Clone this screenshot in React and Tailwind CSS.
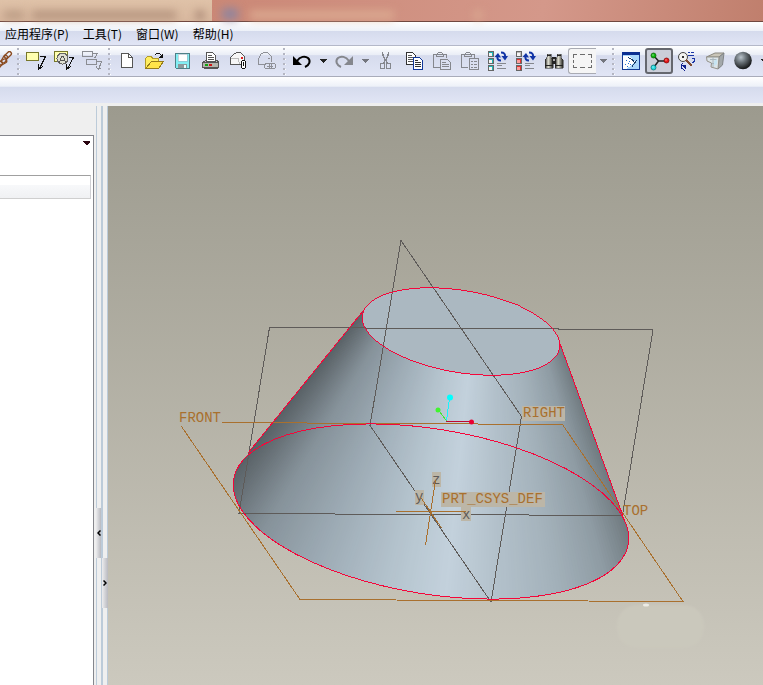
import React from "react";

const MENUS = ["应用程序(P)", "工具(T)", "窗口(W)", "帮助(H)"];

const Svg = ({ children, crisp = true }) => (
  <svg viewBox="0 0 20 20" className="w-5 h-5 shrink-0 overflow-visible" fill="none" aria-hidden="true" shapeRendering={crisp ? "crispEdges" : "auto"}>
    {children}
  </svg>
);

const ToolButton = ({ label, active, children }) => (
  <button
    type="button"
    aria-label={label}
    className={
      active
        ? "w-7 h-[26px] shrink-0 flex items-center justify-center rounded-[3px] border-2 border-[#65676e] bg-[#cbced9]"
        : "w-7 h-[26px] shrink-0 flex items-center justify-center"
    }
  >
    {children}
  </button>
);

const DropArrow = ({ label, color = "#222" }) => (
  <button type="button" aria-label={label} className="w-3.5 h-[26px] shrink-0 flex items-center justify-center">
    <svg width="8" height="4" viewBox="0 0 8 4" aria-hidden="true" shapeRendering="crispEdges">
      <path d="M0 0H8L4 4Z" fill={color} />
    </svg>
  </button>
);

const Grip = () => (
  <div className="w-[7px] shrink-0 flex justify-center">
    <svg width="3" height="27" viewBox="0 0 3 27" aria-hidden="true" shapeRendering="crispEdges">
      {[0, 5, 10, 15, 20, 25].map((y) => (
        <g key={y}>
          <rect x="1" y={y + 1} width="2" height="1" fill="#fff" />
          <rect x="0" y={y} width="2" height="2" fill="#b4b6c2" />
        </g>
      ))}
    </svg>
  </div>
);

const ChainIcon = () => (
  <svg viewBox="0 0 15 20" className="w-[15px] h-5" fill="none" aria-hidden="true">
    <g stroke="#8a4a20" strokeWidth="1.3">
      <rect x="-4" y="-2" width="8" height="4" rx="2" transform="translate(8 4) rotate(-45)" />
      <rect x="-4" y="-2" width="8" height="4" rx="2" transform="translate(4.5 8) rotate(-60)" />
      <rect x="-4" y="-2" width="8" height="4" rx="2" transform="translate(3 11) rotate(-30)" />
      <rect x="-4" y="-2" width="8" height="4" rx="2" transform="translate(-1 14) rotate(-50)" />
    </g>
  </svg>
);

const NoteIcon = () => (
  <Svg>
    <rect x="0.5" y="1.5" width="12" height="8" fill="#ffffb0" stroke="#77772a" />
    <path d="M14 5.5H20M19.5 5.5L13.5 17.5" stroke="#111" />
    <path d="M12.5 13V18.5M13 18L17 15.5" stroke="#111" />
  </Svg>
);

const NoteSymbolIcon = () => (
  <Svg>
    <rect x="0.5" y="0.5" width="13" height="10" fill="#ffffb0" stroke="#77772a" />
    <circle cx="8.5" cy="7.5" r="5.5" fill="#deded2" stroke="#666" />
    <path d="M5 12L8 5H9L12 12M6 9.5H11" stroke="#555" />
    <path d="M15 6.5H20M19.5 6.5L13.5 17.5M12.5 13V18.5M13 18L17 15.5" stroke="#111" />
  </Svg>
);

const NoteMultiIcon = () => (
  <Svg>
    <g stroke="#8a8c92">
      <rect x="0.5" y="0.5" width="10" height="5" />
      <rect x="4.5" y="8.5" width="10" height="5" />
      <path d="M11 2.5H15.5L12.5 7.5M15 10.5H19.5L16.5 18.5M14 15.5L16.5 18.5L19.5 16.5" />
    </g>
  </Svg>
);

const NewIcon = () => (
  <Svg>
    <path d="M4.5 2.5H11.5L15.5 6.5V16.5H4.5Z" fill="#fff" stroke="#555" />
    <path d="M11.5 2.5V6.5H15.5" stroke="#555" />
  </Svg>
);

const OpenIcon = () => (
  <Svg>
    <path d="M0.5 17.5V7.5L2.5 5.5H6.5L7.5 7.5H13.5V10.5" fill="#ffee60" stroke="#b29a28" />
    <path d="M0.5 17.5L6.5 10.5H18.5L13.5 17.5Z" fill="#ffe44a" stroke="#967c1c" />
    <path d="M9.5 4.5L11.5 2.5H14.5L17.5 5.5" stroke="#111" />
    <path d="M18 2V7H13Z" fill="#111" />
  </Svg>
);

const SaveIcon = () => (
  <Svg>
    <path d="M2.5 2.5H16.5V17.5H3.5L2.5 16.5Z" fill="#83eef3" stroke="#4f8088" />
    <rect x="5" y="3" width="9" height="7" fill="#fff" stroke="#9ab" strokeWidth="0.5" />
    <rect x="5" y="13" width="9" height="4" fill="#8d989b" />
    <rect x="11" y="14" width="2" height="3" fill="#e8ffff" />
  </Svg>
);

const PrintIcon = () => (
  <Svg>
    <path d="M1.5 11.5L4.5 9.5H16.5L17.5 11.5Z" fill="#c9c9c2" stroke="#555" />
    <path d="M5.5 10.5V1.5H11.5L14.5 4.5V10.5Z" fill="#fff" stroke="#555" />
    <path d="M7 4.5H11M7 6.5H13M7 8.5H13" stroke="#555" />
    <rect x="1.5" y="11.5" width="16" height="5" fill="#b4b4ac" stroke="#555" />
    <path d="M3 17.5H17" stroke="#555" />
    <rect x="4" y="13" width="3" height="2" fill="#12a312" />
    <rect x="8" y="13" width="3" height="2" fill="#d01515" />
  </Svg>
);

const MailIcon = () => (
  <Svg>
    <path d="M1.5 13.5V6.5L4.5 3.5L7.5 1.5H11.5L15.5 5.5V13.5Z" fill="#f6f6f6" stroke="#555" />
    <path d="M1.5 7.5H9.5L10.5 13.5" stroke="#bbb" />
    <rect x="12" y="6" width="2" height="2" fill="#e02020" />
    <rect x="12.5" y="9.5" width="4" height="8" rx="2" fill="#fff" stroke="#111" />
    <path d="M14.5 11V15" stroke="#111" />
  </Svg>
);

const MailLinkIcon = () => (
  <Svg>
    <g stroke="#8e9097">
      <path d="M9 13.5H1.5V7.5L4.5 2.5L7.5 1.5H10.5L14.5 5.5V11" />
      <path d="M11 7.5H13" />
      <rect x="7.5" y="12.5" width="7" height="5" rx="2" />
      <rect x="12.5" y="12.5" width="6" height="5" rx="2" />
      <path d="M10 15.5H16" />
    </g>
  </Svg>
);

const UndoIcon = () => (
  <Svg crisp={false}>
    <path d="M5 10C8 5.5 13 4.5 16 7C19 10 17.5 14 13 16" stroke="#000" strokeWidth="2" />
    <path d="M1 5V14H10Z" fill="#000" />
  </Svg>
);

const RedoIcon = () => (
  <Svg crisp={false}>
    <path d="M15 10C12 5.5 7 4.5 4 7C1 10 2.5 14 7 16" stroke="#85878d" strokeWidth="2" />
    <path d="M19 5V14H10Z" fill="#85878d" />
  </Svg>
);

const CutIcon = () => (
  <Svg>
    <g stroke="#85878d">
      <path d="M6.5 1V4L11.5 13M12.5 1V4L7.5 13M7.5 3V5L12 13M11.5 3V5L7 13" />
      <rect x="4.5" y="12.5" width="4" height="5" rx="1" />
      <rect x="10.5" y="12.5" width="4" height="5" rx="1" />
    </g>
  </Svg>
);

const CopyIcon = () => (
  <Svg>
    <path d="M2.5 1.5H8.5L11.5 4.5V13.5H2.5Z" fill="#fff" stroke="#333" />
    <path d="M4 4.5H8M4 6.5H10M4 8.5H10M4 10.5H9" stroke="#555" />
    <path d="M9.5 6.5H15.5L18.5 9.5V18.5H9.5Z" fill="#fff" stroke="#12389a" />
    <path d="M11 9.5H14M11 11.5H17M11 13.5H17M11 15.5H17" stroke="#333" />
  </Svg>
);

const PasteIcon = ({ special }) => (
  <Svg>
    <g stroke="#85878d">
      <path d="M8 16.5H1.5V3.5H14.5V7" />
      <path d="M4.5 5.5V3.5L6.5 1.5H9.5L11.5 3.5V5.5Z" />
      {special ? (
        <>
          <rect x="9.5" y="7.5" width="9" height="11" />
          <path d="M11 10.5H13M14 10.5H17M11 13.5H13M14 13.5H17M11 16.5H13M14 16.5H17" />
        </>
      ) : (
        <>
          <path d="M8.5 8.5H15.5L18.5 11.5V18.5H8.5Z" />
          <path d="M10 11.5H14M10 13.5H17M10 15.5H17" />
        </>
      )}
    </g>
  </Svg>
);

const RegenIcon = ({ colors }) => (
  <Svg>
    {colors.map((c, i) => (
      <g key={i}>
        <rect x="0.5" y={i * 7 + 0.5} width="5" height="5" fill={c} stroke="#666" />
        <rect x="1" y={i * 7 + 2} width="3" height="3" fill={i === 0 || c === "#1fb5b5" ? "#f4f4f4" : "#ff9b9b"} />
      </g>
    ))}
    <g shapeRendering="auto">
      <path d="M13 9.5C10 9.5 9 8 9.5 5M13 1.500C16 1.500 17.500 3 17 6" stroke="#1134a6" strokeWidth="2" />
      <path d="M6.500 6L10 2L13 6.500ZM13.500 5H20L17 9.500Z" fill="#1134a6" />
    </g>
    <path d="M9 12.5H18M9 14.5H14M9 17.5H18" stroke="#85878d" />
  </Svg>
);

const FindIcon = () => (
  <Svg>
    <defs>
      <linearGradient id="tube" x1="0" x2="1" y1="0" y2="0">
        <stop offset="0" stopColor="#1a1a18" />
        <stop offset=".4" stopColor="#e5e5d8" />
        <stop offset="1" stopColor="#22221e" />
      </linearGradient>
    </defs>
    <path d="M3 3H7V6L9 9V17H1V9L3 6Z" fill="url(#tube)" stroke="#222" strokeWidth="0.5" />
    <path d="M13 3H17V6L19 9V17H11V9L13 6Z" fill="url(#tube)" stroke="#222" strokeWidth="0.5" />
    <rect x="8" y="6" width="4" height="7" fill="#222" />
    <rect x="9" y="8" width="2" height="2" fill="#aaa" />
    <path d="M3 4.5H7M13 4.5H17M1 14.5H9M11 14.5H19" stroke="#222" />
  </Svg>
);

const RepaintIcon = () => (
  <Svg>
    <rect x="1.5" y="1.5" width="17" height="17" fill="#a9d7fb" stroke="#123b94" />
    <rect x="1" y="1" width="18" height="3" fill="#0b2f91" />
    <path d="M2 5H8L14 10L10 15L5 18H2Z" fill="#fff" />
    <path d="M5 9.5H6M8 10.5H9M7 12.5H8M4 13.5H5M9 13.5H10M6 15.5H7" stroke="#2370d0" />
    <path d="M7 6.500L11 8.500L14 12M15.500 9.500L11 15.500" stroke="#173b68" />
  </Svg>
);

const SpinIcon = () => (
  <Svg crisp={false}>
    <path d="M5 5L9.5 10H17M9.5 10L5 16" stroke="#222" strokeWidth="1.5" />
    <circle cx="4.5" cy="4.5" r="2.5" fill="#0db80d" stroke="#075a07" strokeWidth=".7" />
    <circle cx="17.5" cy="9.5" r="2.5" fill="#e61919" stroke="#700" strokeWidth=".7" />
    <circle cx="4.5" cy="16.5" r="2.5" fill="#22dbe0" stroke="#076c70" strokeWidth=".7" />
    <path d="M3.5 4H4.5M16.5 9H17.5M3.5 16H4.5" stroke="#fff" />
  </Svg>
);

const OrientIcon = () => (
  <Svg>
    <circle cx="6" cy="6" r="4.5" fill="#f3f3f0" stroke="#444" shapeRendering="auto" />
    <rect x="5" y="5" width="2" height="2" fill="#333" />
    <path d="M9 9L15 15" stroke="#7e4b31" strokeWidth="2" />
    <path d="M11 1.5H13M14 1.5H17M11 4.5H17M15 7.5H17.5V10L15.5 12" stroke="#1a35a6" />
    <path d="M6 12L4.500 14V17L8 19.500" stroke="#10208e" />
    <path d="M4 14H9V18Z" fill="#10208e" />
  </Svg>
);

const ViewsIcon = () => (
  <Svg crisp={false}>
    <path d="M1.5 6L10 2H19L14 6Z" fill="#c9c5b8" stroke="#8b8980" />
    <path d="M14 6L19 2L17.5 14L13 18Z" fill="#a3a8aa" stroke="#808486" />
    <path d="M1.5 6H14L13 18L6 16L6.5 12L2 10Z" fill="#dce4e8" stroke="#95938b" />
    <path d="M5 8.5H12M8 6V16M7 12.5H12" stroke="#a8b6be" />
    <path d="M9 10L12 8V13L9 15Z" fill="#c6e4f2" />
  </Svg>
);

const SphereIcon = () => (
  <Svg crisp={false}>
    <defs>
      <radialGradient id="ball" cx="38%" cy="32%" r="65%">
        <stop offset="0" stopColor="#b9c3cb" />
        <stop offset=".45" stopColor="#6b7379" />
        <stop offset="1" stopColor="#1b1d1f" />
      </radialGradient>
    </defs>
    <circle cx="10" cy="9.5" r="8.8" fill="url(#ball)" />
  </Svg>
);

// shading stops along the y = 600 line, read as rays from the cone's apex
const APEX = [491, 151.5];
const SHADE = [
  [120, [84, 92, 97]],
  [160, [103, 112, 118]],
  [220, [134, 146, 154]],
  [318, [161, 175, 185]],
  [400, [184, 199, 209]],
  [445, [195, 209, 220]],
  [500, [178, 192, 202]],
  [554, [164, 178, 187]],
  [610, [143, 156, 164]],
  [640, [122, 133, 139]],
  [660, [106, 116, 121]],
];

const shadeAt = (x) => {
  const i = Math.max(1, SHADE.findIndex(([sx]) => sx >= x));
  const [x0, a] = SHADE[i - 1];
  const [x1, b] = SHADE[i];
  const t = (x - x0) / (x1 - x0);
  return `rgb(${a.map((v, k) => Math.round(v + (b[k] - v) * t)).join(",")})`;
};

const rays = [];
for (let x = 120; x < 660; x += 3) rays.push(x);

const Label = ({ x, y, box, color = "#a9702e", children }) => (
  <>
    {box && <rect x={box[0]} y={box[1]} width={box[2]} height={box[3]} fill="#bcb6a7" />}
    <text x={x} y={y} fill={color} fontSize="14" fontFamily='"Liberation Mono", monospace'>
      {children}
    </text>
  </>
);

const Model = () => (
  <svg viewBox="108 106 655 579" className="w-full h-full" fill="none" role="img" aria-label="PRT_CSYS_DEF">
    <defs>
      <clipPath id="body">
        <path d="M363 311L248 453L431 560L623 516L559 341Z" />
        <ellipse cx="431" cy="511.5" rx="200" ry="82.5" transform="rotate(9.3 431 511.5)" />
      </clipPath>
      <filter id="haze" x="-10%" y="-10%" width="120%" height="120%">
        <feGaussianBlur stdDeviation="1" />
      </filter>
    </defs>
    <rect x="617" y="605" width="87" height="43" rx="20" fill="#cac8bc" filter="url(#haze)" />
    <ellipse cx="646" cy="605" rx="3" ry="1.5" fill="#ecebe4" />
    <g clipPath="url(#body)">
      {rays.map((x) => (
        <path key={x} d={`M${APEX[0]} ${APEX[1]}L${x} 600H${x + 5}Z`} fill={shadeAt(x + 1)} />
      ))}
    </g>
    <g shapeRendering="crispEdges">
      <ellipse cx="461" cy="331.5" rx="100" ry="41" transform="rotate(9.6 461 331.5)" fill="#abb8c1" />
      <g stroke="#5e5b59">
        <path d="M269.5 327.5L653 329.5L622.5 515.5L239 513.5Z" />
        <path d="M401 240.5L521.5 416.5L491 602L370 425.5Z" />
      </g>
      <path d="M222 422.5L562.5 424.5L683 601.5L300 599.5L181.5 426.5" stroke="#a9702e" />
      <g stroke="#f5063a">
        <ellipse cx="461" cy="331.5" rx="100" ry="41" transform="rotate(9.6 461 331.5)" />
        <ellipse cx="431" cy="511.5" rx="200" ry="82.5" transform="rotate(9.3 431 511.5)" />
        <path d="M363 311L248 453M559 341L623 516" />
      </g>
      <path d="M446.5 421L449.5 398" stroke="#18f4ff" />
      <path d="M446.5 421L438.5 410" stroke="#48e838" />
      <path d="M446 421.5H471" stroke="#c00634" />
    </g>
    <circle cx="450" cy="397.5" r="3" fill="#0ff" />
    <circle cx="438" cy="410" r="2.5" fill="#41f52f" />
    <circle cx="471.5" cy="422" r="2.5" fill="#ea0032" />

    <Label x={179} y={422}>FRONT</Label>
    <Label x={523} y={417} box={[522, 406, 43, 15]}>RIGHT</Label>
    <Label x={623} y={515}>TOP</Label>
    <Label x={442} y={503} box={[441, 492, 104, 15]}>PRT_CSYS_DEF</Label>
    <Label x={432} y={484} box={[432, 472, 9, 15]} color="#5e5b59">z</Label>
    <Label x={415} y={501} box={[415, 490, 9, 15]} color="#5e5b59">y</Label>
    <Label x={462} y={519} box={[461, 507, 10, 14]} color="#5e5b59">x</Label>
    <path d="M396 511.5H466M435.5 480L425.5 545M420.5 497L441.5 528" stroke="#a9702e" shapeRendering="crispEdges" />
  </svg>
);

const Splitter = ({ first }) => (
  <div className={first ? "w-[5px] shrink-0 flex flex-col" : "w-1.5 shrink-0 flex flex-col"}>
    <div className={first ? "grow-[402] border-l border-[#bccbd9]" : "grow-[452] border-x border-[#bccbd9]"} />
    <button
      type="button"
      aria-label={first ? "<" : ">"}
      className="h-[50px] w-full flex items-center justify-center bg-linear-to-r from-[#ececee] to-[#b9bac0]"
    >
      <svg width="4" height="6" viewBox="0 0 4 6" fill="none" aria-hidden="true">
        <path d={first ? "M3.5 0.5L1 3L3.5 5.5" : "M0.5 0.5L3 3L0.5 5.5"} stroke="#000" strokeWidth="1.5" />
      </svg>
    </button>
    <div className={first ? "grow-[127] border-l border-[#bccbd9]" : "grow-[77] border-x border-[#bccbd9]"} />
  </div>
);

const Toolbar = () => (
  <div className="h-[31px] shrink-0 flex items-center overflow-hidden border-b border-[#a9acba] bg-[linear-gradient(#ffffff,#e9edf6_30%,#d6dbed_32%,#e1e5f5)]">
    <button type="button" aria-label="Link" className="w-[15px] shrink-0"><ChainIcon /></button>
    <Grip />
    <ToolButton label="Note"><NoteIcon /></ToolButton>
    <ToolButton label="Symbol"><NoteSymbolIcon /></ToolButton>
    <ToolButton label="Notes"><NoteMultiIcon /></ToolButton>
    <Grip />
    <ToolButton label="New"><NewIcon /></ToolButton>
    <ToolButton label="Open"><OpenIcon /></ToolButton>
    <ToolButton label="Save"><SaveIcon /></ToolButton>
    <ToolButton label="Print"><PrintIcon /></ToolButton>
    <ToolButton label="Mail"><MailIcon /></ToolButton>
    <ToolButton label="Mail link"><MailLinkIcon /></ToolButton>
    <Grip />
    <ToolButton label="Undo"><UndoIcon /></ToolButton>
    <DropArrow label="Undo list" />
    <ToolButton label="Redo"><RedoIcon /></ToolButton>
    <DropArrow label="Redo list" color="#74767e" />
    <ToolButton label="Cut"><CutIcon /></ToolButton>
    <ToolButton label="Copy"><CopyIcon /></ToolButton>
    <ToolButton label="Paste"><PasteIcon /></ToolButton>
    <ToolButton label="Paste special"><PasteIcon special /></ToolButton>
    <ToolButton label="Regenerate"><RegenIcon colors={["#1fb5b5", "#1fb5b5", "#1fb5b5"]} /></ToolButton>
    <ToolButton label="Regenerate manager"><RegenIcon colors={["#bbb", "#e23030", "#e23030"]} /></ToolButton>
    <ToolButton label="Find"><FindIcon /></ToolButton>
    <button type="button" aria-label="Select" className="w-7 h-[26px] shrink-0 flex items-center justify-center rounded-l-[3px] border border-r-0 border-[#a9abb3] bg-[#f5f5f5]">
      <svg width="20" height="14" viewBox="0 0 20 14" fill="none" aria-hidden="true" shapeRendering="crispEdges">
        <path d="M0.5 4V0.5H4M7 0.5H12M15 0.5H18.5V4M18.5 6V9M18.5 11V13.5H15M12 13.5H7M4 13.5H0.5V11M0.5 9V6" stroke="#6c6c6c" />
      </svg>
    </button>
    <DropArrow label="Select list" color="#74767e" />
    <Grip />
    <ToolButton label="Repaint"><RepaintIcon /></ToolButton>
    <ToolButton label="Spin center" active><SpinIcon /></ToolButton>
    <ToolButton label="Orient"><OrientIcon /></ToolButton>
    <ToolButton label="Saved views"><ViewsIcon /></ToolButton>
    <ToolButton label="Shading"><SphereIcon /></ToolButton>
    <DropArrow label="Shading list" />
  </div>
);

const App = () => (
  <div className="h-screen flex flex-col overflow-hidden bg-[#efefef]">
    {/* Window title */}
    <div className="h-[22px] shrink-0 flex border-b border-[#704840] bg-[#cf917f]">
      <div className="w-[212px] shrink-0 flex items-center bg-linear-to-b from-[#dfc2a8] to-[#d8b79e]">
        <div className="mt-2 ml-1 w-5 h-2 bg-[#b99a83] blur-xs" />
        <div className="mt-2 ml-2 w-36 h-2 bg-[#b3937d] blur-xs" />
        <div className="mt-2 ml-5 w-2 h-2 bg-[#a3826f] blur-xs" />
      </div>
      <div className="grow flex items-center bg-linear-[100deg] from-[#cb8876] from-0% via-[#d4988a] via-60% to-[#c07f6d]">
        <div className="mt-1.5 ml-2.5 w-4 h-3 bg-[#92859c] blur-xs" />
        <div className="mt-2 ml-3 w-36 h-2 bg-[#dcab91] blur-xs" />
        <div className="mt-2 ml-20 w-2 h-2 bg-[#dcab91] blur-xs" />
      </div>
    </div>

    {/* Menu bar */}
    <div className="h-6 shrink-0 flex items-center gap-3.5 px-[5px] border-b border-[#b4b8c9] bg-[linear-gradient(#ffffff,#edf1f8_38%,#d5dbed_40%,#e1e5f5)]">
      {MENUS.map((menu) => (
        <button key={menu} type="button" className="text-xs text-black whitespace-nowrap font-['Noto_Sans_CJK_SC',sans-serif]">
          {menu}
        </button>
      ))}
    </div>

    <Toolbar />
    <div className="h-[26px] shrink-0 bg-[linear-gradient(#ffffff,#edf1f8_36%,#d5dbed_38%,#e1e5f5)]" />

    <div className="grow min-h-0 flex pt-[3px]">
      {/* Model tree */}
      <div className="w-24 shrink-0 flex flex-col pt-[29px] pr-0.5">
        <div className="grow bg-white border-t border-r border-[#85868c]">
          <div className="h-[39px] flex justify-end">
            <button type="button" aria-label="Tree settings" className="pt-[5px] pr-[3px] flex items-start">
              <svg width="7" height="4" viewBox="0 0 7 4" aria-hidden="true" shapeRendering="crispEdges">
                <path d="M0 0H7V1L4 4H3L0 1Z" fill="#2a0410" />
              </svg>
            </button>
          </div>
          <div className="mr-0.5 h-6 border-t border-r border-b border-t-[#a0a0a0] border-r-[#d0d0d4] border-b-[#cfcfcf] bg-[linear-gradient(#ffffff_40%,#f7f8fa_42%,#f0f1f3)]" />
        </div>
      </div>

      <Splitter first />
      <div className="w-px shrink-0 bg-[#bccbd9]" />
      <Splitter />

      <div className="grow min-w-0 bg-linear-to-b from-[#9c9a8e] to-[#ccc9be]">
        <Model />
      </div>
    </div>
  </div>
);

export default App;
